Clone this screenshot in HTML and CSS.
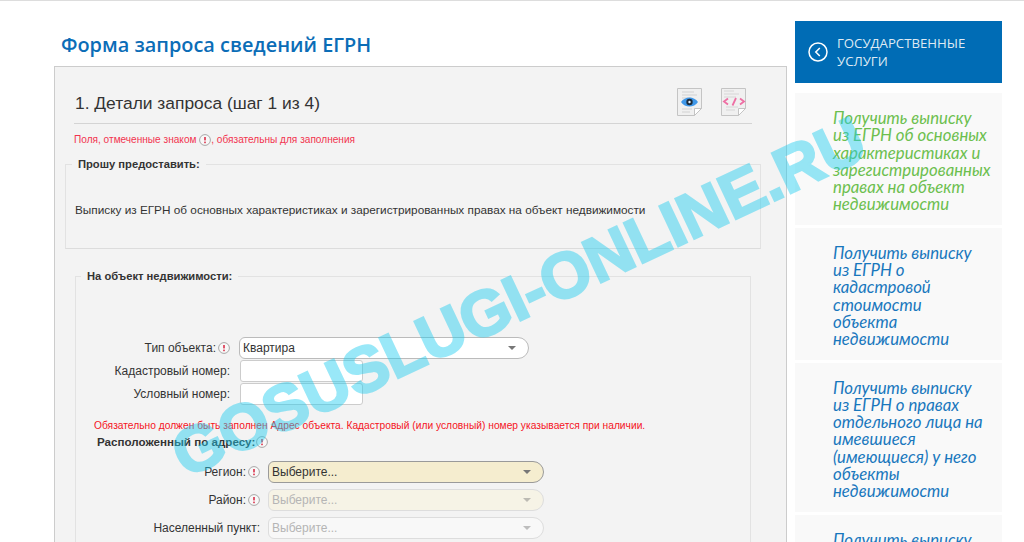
FILE: index.html
```html
<!DOCTYPE html>
<html lang="ru">
<head>
  <meta charset="utf-8"/>
  <title>Форма запроса сведений ЕГРН</title>
  <link rel="stylesheet" href="styles.css">
</head>
<body>
  <svg class="defs" width="0" height="0">
    <symbol id="req" viewBox="0 0 12 12">
      <circle cx="6" cy="6" r="5.4" fill="#f8f8f8" stroke="#a8a8a8" stroke-width="1"/>
      <rect x="5.2" y="3" width="1.6" height="3.4" fill="#d9304a"/>
      <rect x="5.2" y="7.6" width="1.6" height="1.6" fill="#d9304a"/>
    </symbol>
    <symbol id="arrow" viewBox="0 0 8 4">
      <path d="M0 0h8L4 4z" fill="#777"/>
    </symbol>
  </svg>

  <div class="page">
    <main class="content">
      <h1>Форма запроса сведений ЕГРН</h1>
      <div class="panel">
        <div class="step-head">
          <h2>1. Детали запроса (шаг 1 из 4)</h2>
          <div class="doc-icons">
            <svg width="27" height="30" viewBox="0 0 27 30">
              <path d="M1.5 1.5h24v20l-7 7h-17z" fill="#f0f0f0" stroke="#c4c4c4"/>
              <path d="M25.5 21.5h-7v7z" fill="#fff" stroke="#c4c4c4"/>
              <path d="M6 5h12M6 8h15M6 11h9M6 22h10M6 25h8" stroke="#d2d2d2"/>
              <path d="M5 15c4-6 13-6 17 0-4 6-13 6-17 0z" fill="#3f97e8"/>
              <circle cx="13.500" cy="15" r="3.200" fill="#1c2b3a"/>
              <circle cx="13.500" cy="15" r="1.200" fill="#e8f2fb"/>
            </svg>
            <svg width="27" height="30" viewBox="0 0 27 30">
              <path d="M1.5 1.5h24v20l-7 7h-17z" fill="#f0f0f0" stroke="#c4c4c4"/>
              <path d="M25.5 21.5h-7v7z" fill="#fff" stroke="#c4c4c4"/>
              <path d="M4 4h10M4 7h15M4 10h12M6 20h12M6 23h9" stroke="#d6d6d6"/>
              <path d="M8 11.500l-4 3 4 3M20 11.500l4 3-4 3M16 11l-3.500 7.500" fill="none" stroke="#ee6fa4" stroke-width="1.800"/>
            </svg>
          </div>
        </div>
        <p class="req-note">Поля, отмеченные знаком <svg class="req"><use href="#req"/></svg>, обязательны для заполнения</p>

        <fieldset class="box box-request">
          <legend>Прошу предоставить:</legend>
          <p>Выписку из ЕГРН об основных характеристиках и зарегистрированных правах на объект недвижимости</p>
        </fieldset>

        <fieldset class="box box-object">
          <legend>На объект недвижимости:</legend>
          <div class="rows">
            <label class="short">Тип объекта:</label>
            <svg class="req"><use href="#req"/></svg>
            <div class="select wide"><span>Квартира</span><svg class="arrow"><use href="#arrow"/></svg></div>
            <label class="long">Кадастровый номер:</label>
            <div class="input"></div>
            <label class="long">Условный номер:</label>
            <div class="input"></div>
          </div>
          <p class="addr-note">Обязательно должен быть заполнен Адрес объекта. Кадастровый (или условный) номер указывается при наличии.</p>
          <div class="addr-head">Расположенный по адресу:<svg class="req"><use href="#req"/></svg></div>
          <div class="addr-rows">
            <label>Регион:<svg class="req"><use href="#req"/></svg></label>
            <div class="select active"><span>Выберите...</span><svg class="arrow"><use href="#arrow"/></svg></div>
            <label>Район:<svg class="req"><use href="#req"/></svg></label>
            <div class="select off tinted"><span>Выберите...</span><svg class="arrow"><use href="#arrow"/></svg></div>
            <label>Населенный пункт:</label>
            <div class="select off"><span>Выберите...</span><svg class="arrow"><use href="#arrow"/></svg></div>
          </div>
        </fieldset>
      </div>
    </main>

    <aside class="side">
      <div class="side-head">
        <svg width="20" height="20" viewBox="0 0 20 20">
          <circle cx="10" cy="10" r="9" fill="none" stroke="#fff" stroke-width="1.500"/>
          <path d="M11.800 6l-4 4 4 4" fill="none" stroke="#fff" stroke-width="1.500"/>
        </svg>
        <span>ГОСУДАРСТВЕННЫЕ УСЛУГИ</span>
      </div>
      <a class="side-item current">Получить выписку<br>из ЕГРН об основных<br>характеристиках и<br>зарегистрированных<br>правах на объект<br>недвижимости</a>
      <a class="side-item">Получить выписку<br>из ЕГРН о<br>кадастровой<br>стоимости<br>объекта<br>недвижимости</a>
      <a class="side-item">Получить выписку<br>из ЕГРН о правах<br>отдельного лица на<br>имевшиеся<br>(имеющиеся) у него<br>объекты<br>недвижимости</a>
      <a class="side-item">Получить выписку</a>
    </aside>
  </div>

  <div class="watermark">GOSUSLUGI-ONLINE.RU</div>
</body>
</html>
```

FILE: styles.css
```css
html, body {
  margin: 0;
  height: 542px;
  overflow: hidden;
}
body {
  font-family: "Liberation Sans", Arial, sans-serif;
  font-size: 12px;
  color: #333;
  background-color: #fff;
  border-top: 1px solid #ddd;
  box-sizing: border-box;
  position: relative;
}
.defs {
  position: absolute;
}
.page {
  display: flex;
  align-items: flex-start;
  height: 541px;
  overflow: hidden;
}
.content {
  width: 733px;
  margin-left: 54px;
}
h1 {
  margin: 30px 0 0 7px;
  height: 35px;
  font-family: "Open Sans", sans-serif;
  font-size: 19.900px;
  line-height: 28px;
  font-weight: 600;
  color: #0b6db7;
}
.panel {
  height: 520px;
  box-sizing: border-box;
  background-color: #f3f3f3;
  border: 1px solid #ccc;
  padding: 0 25px 0 10px;
}
.step-head {
  display: flex;
  justify-content: space-between;
  margin: 0 9px 0 9px;
  height: 57px;
  border-bottom: 1px solid #d4d4d4;
  box-sizing: border-box;
  padding-right: 5px;
}
h2 {
  margin: 24px 0 0 1px;
  font-size: 17.400px;
  line-height: 24px;
  font-weight: normal;
  color: #333;
}
.doc-icons {
  display: flex;
  gap: 17px;
  margin-top: 20px;
}
.req {
  width: 12px;
  height: 12px;
  flex: none;
  vertical-align: middle;
}
.req-note {
  margin: 8px 0 0 9px;
  height: 16px;
  font-size: 10.100px;
  line-height: 16px;
  color: #f2334f;
}
.box {
  margin: 0;
  padding: 0;
  border: 0;
  border-top: 1px solid #e2e2e2;
  border-left: 1px solid #e2e2e2;
  min-width: 0;
}
.box legend {
  font-weight: bold;
  font-size: 11.200px;
  padding: 0 6px;
  line-height: 14px;
  color: #333;
}
.box-request {
  margin-top: 9px;
  height: 92px;
  box-sizing: border-box;
  border-bottom: 1px solid #dcdcdc;
  border-right: 1px solid #e2e2e2;
}
.box-request legend {
  margin-left: 6px;
}
.box-request p {
  margin: 31px 0 0 9px;
  font-size: 11.790px;
  line-height: 16px;
}
.box-object {
  margin: 20px 10px 0 10px;
  height: 300px;
  border-right: 1px solid #e2e2e2;
}
.box-object legend {
  margin-left: 5px;
}
.rows {
  display: grid;
  grid-template-columns: 140px 12px 1fr;
  column-gap: 2px;
  row-gap: 1px;
  align-items: center;
  margin-top: 54px;
}
.rows label {
  text-align: right;
}
.rows .long {
  grid-column: 1 / 3;
}
.rows .select {
  margin-left: 7px;
}
.rows .input {
  margin-left: 8px;
}
.select {
  display: flex;
  align-items: center;
  justify-content: space-between;
  box-sizing: border-box;
  height: 22px;
  padding: 0 12px 0 3px;
  border: 1px solid #bbb;
  border-radius: 6px 11px 11px 6px;
  background-color: #fff;
  font-size: 12px;
}
.wide {
  width: 290px;
}
.arrow {
  width: 8px;
  height: 4px;
}
.input {
  width: 123px;
  height: 22px;
  box-sizing: border-box;
  border: 1px solid #ccc;
  border-radius: 3px;
  background-color: #fff;
}
.addr-note {
  margin: 14px 0 0 18px;
  font-size: 10.240px;
  line-height: 14px;
  color: #f5141e;
  white-space: nowrap;
}
.addr-head {
  display: flex;
  align-items: flex-end;
  gap: 1px;
  margin: -1px 0 0 21px;
  height: 16px;
  font-size: 11.600px;
  font-weight: bold;
}
.addr-rows {
  display: grid;
  grid-template-columns: 184px 276px;
  column-gap: 8px;
  row-gap: 6px;
  align-items: center;
  margin-top: 13px;
}
.addr-rows label {
  display: flex;
  justify-content: flex-end;
  align-items: center;
  gap: 2px;
}
.active {
  background-color: #f5edcf;
  border-color: #9a9a9a;
  color: #333;
}
.off {
  border-color: #ddd;
  background-color: #f8f8f8;
  color: #b5b5b5;
}
.tinted {
  background-color: #f6f3e6;
}
.off .arrow {
  opacity: 0.45;
}
.side {
  width: 207px;
  margin-left: 8px;
  padding-top: 20px;
  display: flex;
  flex-direction: column;
  gap: 3px;
  flex: none;
}
.side-head {
  display: flex;
  align-items: center;
  gap: 9px;
  height: 62px;
  box-sizing: border-box;
  padding: 0 20px 0 13px;
  margin-bottom: 7px;
  background-color: #006cb5;
  color: #dfeaf3;
  font-family: "Open Sans", sans-serif;
  font-size: 13.200px;
  line-height: 18px;
}
.side-head svg {
  flex: none;
}
.side-item {
  display: block;
  background-color: #f9f9f9;
  padding: 16px 0 12px 38px;
  font-family: Lato, sans-serif;
  font-style: italic;
  font-size: 16.800px;
  line-height: 17.300px;
  color: #1877bd;
  white-space: nowrap;
}
.current {
  color: #6cbf4e;
}
.watermark {
  position: absolute;
  left: 140px;
  top: 261px;
  white-space: nowrap;
  font-family: "Liberation Sans", Arial, sans-serif;
  font-weight: bold;
  font-size: 64px;
  line-height: 70px;
  color: #1fcdf0;
  -webkit-text-stroke: 2.500px #1fcdf0;
  opacity: 0.45;
  transform: rotate(-25.200deg);
  pointer-events: none;
}
```
